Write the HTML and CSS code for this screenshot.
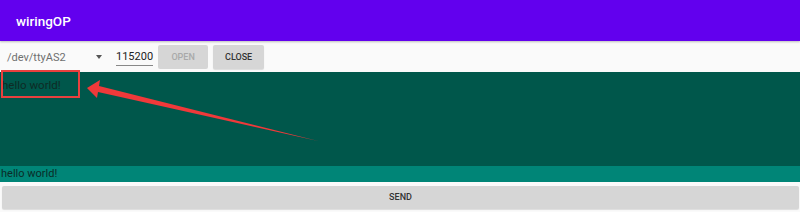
FILE: index.html
```html
<!DOCTYPE html>
<html>
<head>
<meta charset="utf-8">
<link rel="stylesheet" href="styles.css">
</head>
<body>
<div class="app">
  <header class="appbar"><span class="title">wiringOP</span></header>
  <div class="toolbar">
    <div class="spinner"><span class="dev">/dev/ttyAS2</span><span class="caret"></span></div>
    <div class="baud">115200</div>
    <button class="btn disabled">OPEN</button>
    <button class="btn">CLOSE</button>
  </div>
  <div class="recv"><span class="recv-text">hello world!</span></div>
  <div class="send-row">hello world!</div>
  <div class="send-wrap"><button class="btn send">SEND</button></div>
  <div class="highlight"></div>
  <svg class="arrow" width="800" height="212" viewBox="0 0 800 212">
    <polygon points="87,88 100,80 99,86 318,141 98,92 97,98" fill="#f0393a"/>
  </svg>
</div>
</body>
</html>
```
FILE: styles.css
```css
* { box-sizing: border-box; }
html, body { margin: 0; padding: 0; }
body { width: 800px; height: 212px; overflow: hidden; background: #fafafa; font-family: Roboto, "Liberation Sans", sans-serif; }
.app { position: relative; width: 800px; height: 212px; display: flex; flex-direction: column; }
.appbar { height: 41px; background: #6200ee; display: flex; align-items: center; padding-left: 16px; padding-top: 1px; box-shadow: 0 1px 2px rgba(0,0,0,0.25); position: relative; z-index: 1; }
.title { color: #fff; font-size: 13.5px; font-weight: 500; }
.toolbar { height: 31px; display: flex; align-items: center; padding-top: 1px; background: #fafafa; }
.spinner { width: 108px; display: flex; align-items: center; padding-left: 7px; }
.dev { font-size: 11px; color: #6f6f6f; flex: 1; }
.caret { width: 0; height: 0; border-left: 3.5px solid transparent; border-right: 3.5px solid transparent; border-top: 4px solid #555; margin-right: 6px; }
.baud { font-size: 11px; color: #222; margin-left: 8px; padding-bottom: 2px; border-bottom: 1px solid #888; margin-top: 2px; white-space: nowrap; min-width: 37px; }
.btn { border: none; background: #d6d6d6; font-family: Roboto, "Liberation Sans", sans-serif; font-weight: 500; font-size: 9px; color: #333; border-radius: 2px; height: 24px; padding: 0; box-shadow: 0 1px 1px rgba(0,0,0,0.12); }
.toolbar .btn { width: 50px; margin-left: 5px; }
.toolbar .btn.disabled { color: #a9a9a9; box-shadow: none; }
.toolbar .btn:last-child { width: 51px; }
.recv { height: 94px; background: #00574b; padding: 2px 0 0 2px; }
.recv-text { font-size: 11.5px; color: #0e2b25; }
.send-row { height: 16px; background: #008577; font-size: 11px; color: #0a2c27; padding-left: 1px; line-height: 16px; }
.send-wrap { padding: 3px 1px 0 2px; }
.btn.send { width: 100%; height: 23px; font-size: 9px; }
.highlight { position: absolute; left: 1px; top: 70px; width: 79px; height: 28px; border: 2px solid #e8403e; }
.arrow { position: absolute; left: 0; top: 0; }
```
